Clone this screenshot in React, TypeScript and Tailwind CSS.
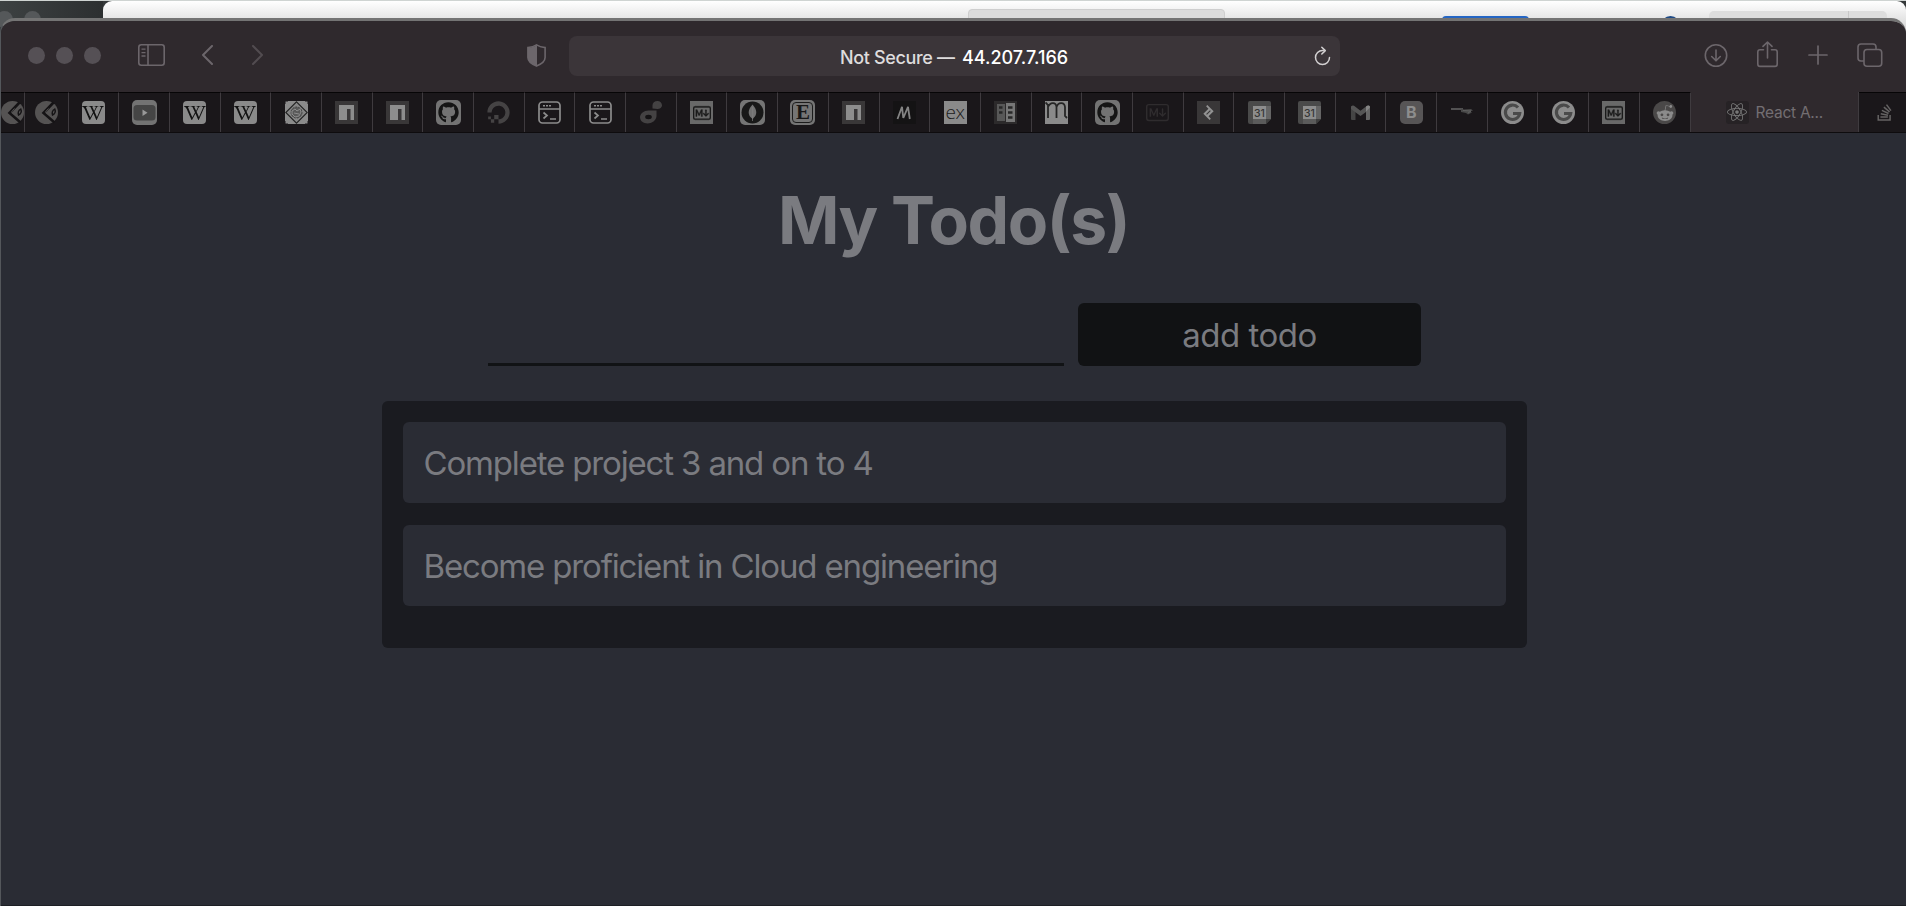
import React from "react";
import { FaWikipediaW, FaGithub, FaDigitalOcean, FaReact, FaStackOverflow, FaRedditAlien } from "react-icons/fa";
import { SiToptal } from "react-icons/si";
import { BsMarkdown } from "react-icons/bs";

const ICON = "block h-[23px] w-[23px] shrink-0";

function Kite() {
  return (
    <svg className={ICON} viewBox="0 0 23 23">
      <circle cx="11.5" cy="11.5" r="11.5" fill="#555353" />
      <path d="M18.500 1.500 8.500 12l11 9.500" stroke="#151315" strokeWidth="2.600" fill="none" />
      <path d="M13 13.500 10.500 11l3-3.500" stroke="#555353" strokeWidth="1" fill="none" />
      <path d="M19.800 8c1.200 2.500.2 5-2.300 6-.8-2.500.3-4.800 2.300-6z" stroke="#151315" strokeWidth="1.400" fill="#555353" />
    </svg>
  );
}

function Wiki() {
  return (
    <span className="flex h-[23px] w-[23px] items-center justify-center rounded-[4px] bg-[#8a8a8a] text-[#121212]">
      <FaWikipediaW className="h-[20px] w-[22px]" />
    </span>
  );
}

function Video() {
  return (
    <svg className="block h-[25px] w-[25px]" viewBox="0 0 25 25">
      <rect width="25" height="25" rx="5" fill="#737373" />
      <rect x="1.500" y="5" width="22" height="15.500" rx="3.500" fill="#454545" />
      <path d="m10.500 9.500 5 3.200-5 3.200z" fill="#999" />
    </svg>
  );
}

function Diamond() {
  return (
    <svg className={ICON} viewBox="0 0 23 23">
      <rect width="23" height="23" fill="#8b8b8b" />
      <path d="M11.500.8 22.200 11.500 11.500 22.200.8 11.500z" fill="#858585" stroke="#222" strokeWidth="1.100" />
      <circle cx="11.500" cy="11.500" r="5.500" fill="#595959" stroke="#444" strokeDasharray="2 1" />
      <path d="M7 10l3-2 2 2 3-2 1 3-2 4-4 1-3-3zM9 12l5 1" stroke="#929292" fill="none" strokeWidth=".9" />
      <path d="M0 3V0h3M20 0h3v3M0 20v3h3M20 23h3v-3" stroke="#1a171a" strokeWidth="1" fill="none" />
    </svg>
  );
}

function Npm() {
  return (
    <svg className={ICON} viewBox="0 0 23 23">
      <rect width="23" height="23" fill="#393738" />
      <path d="M4 4h15v15h-3.500V8H12v11H4z" fill="#8d8d8d" />
    </svg>
  );
}

function Github() {
  return (
    <span className="flex h-[25px] w-[25px] items-center justify-center rounded-[5px] bg-[#737373] text-[#151515]">
      <FaGithub className="h-[21px] w-[21px]" />
    </span>
  );
}

function Ocean() {
  return <FaDigitalOcean className="h-[23px] w-[23px] text-[#454344]" />;
}

function Console() {
  return (
    <svg className={ICON} viewBox="0 0 23 23" fill="none" stroke="#8c8c8c">
      <rect x="1" y="1" width="21" height="21" rx="3.500" strokeWidth="1.700" />
      <path d="M1 8h21" strokeWidth="1.500" />
      <path d="M5 4.700h8" strokeWidth="1.600" strokeDasharray="2 1" />
      <path d="m5.500 11.500 3.500 3-3.500 3M12 18h6" strokeWidth="1.700" />
    </svg>
  );
}

function Duck() {
  return (
    <svg className={ICON} viewBox="0 0 23 23" fill="#444243">
      <path d="M13.500 7.500V4.500C13.500 1.500 15.500 0 18.500 0 21 0 23 2 23 4.300S21 8 18.500 8z" />
      <path d="M17.500 9.500H9.500C5 9.500 1 12.500 1 16.300s3.500 6.200 7.500 6.200S17.500 19.500 17.500 15z" />
      <ellipse cx="9.500" cy="16" rx="3.300" ry="2.200" fill="#141214" />
    </svg>
  );
}

function Markdown() {
  return (
    <span className="flex h-[23px] w-[23px] items-center justify-center bg-[#696969] text-[#1c1c1c]">
      <BsMarkdown className="h-[18px] w-[18px]" stroke="currentColor" strokeWidth=".35" />
    </span>
  );
}

function Mongo() {
  return (
    <svg className="block h-[25px] w-[25px]" viewBox="0 0 25 25">
      <rect width="25" height="25" rx="5" fill="#757575" />
      <circle cx="12.500" cy="12.500" r="11" fill="#181818" />
      <path d="M12.500 4.500c-5.500 6-4.500 11-.4 14v2.500h.8v-2.500c4.100-3 5.100-8-.4-14z" fill="#727272" />
      <path d="M12.700 7v12" stroke="#858585" strokeWidth=".6" />
    </svg>
  );
}

function LetterE() {
  return (
    <span className="flex h-[25px] w-[25px] rounded-[5px] bg-[#757575] p-[2px]">
      <span className="flex flex-1 items-center justify-center rounded-[4px] border-[1.500px] border-[#1c1c1c] font-['Liberation_Serif',serif] text-[21px] leading-[21px] font-bold text-[#181818]">E</span>
    </span>
  );
}

function Slashes() {
  return (
    <svg className={ICON} viewBox="0 0 23 23">
      <rect width="23" height="23" fill="#141314" />
      <path d="M4.500 18 9 5.800 10.300 17 15 5.800 16.800 18" stroke="#848484" strokeWidth="1.800" strokeLinejoin="bevel" fill="none" />
    </svg>
  );
}

function Express() {
  return (
    <span className="flex h-[23px] w-[23px] items-center justify-center bg-[#8a8a8a] font-['Open_Sans',sans-serif] text-[19px] leading-[23px] font-light tracking-[-0.3px] text-[#202020]">
      ex
    </span>
  );
}

function Pages() {
  return (
    <svg className={ICON} viewBox="0 0 23 23">
      <rect width="23" height="23" fill="#2c2a2b" />
      <path d="M3 3h8v17H3z" fill="#585858" />
      <path d="M12 2h9v19h-9z" fill="#777" />
      <path d="M5 6.500h3.500M5 11.500h3.500M14 6.500h4.500M14 11.500h4.500M14 16.500h4.500" stroke="#282828" strokeWidth="2.500" />
    </svg>
  );
}

function Mongoose() {
  return (
    <svg className={ICON} viewBox="0 0 23 23">
      <rect width="23" height="23" fill="#8a8a8a" />
      <path d="M.5 1.500 3 4v13M3 6c2-5 8-5.500 8.500 0v11M11.500 6c1.500-5 8-5.500 8.500 0v9l2 2" stroke="#252525" strokeWidth="1.800" fill="none" />
    </svg>
  );
}

function DimMarkdown() {
  return <BsMarkdown className="h-[23px] w-[23px] text-[#2f2c2e]" />;
}

function Toptal() {
  return (
    <span className="flex h-[23px] w-[23px] items-center justify-center bg-[#393738] text-[#929292]">
      <SiToptal className="h-[15px] w-[15px]" />
    </span>
  );
}

function Calendar() {
  return (
    <svg className={ICON} viewBox="0 0 23 23">
      <path d="M2 0h19q2 0 2 2v16l-5 5H2q-2 0-2-2V2q0-2 2-2z" fill="#4a4a4a" />
      <path d="M18 5h5v13h-5z" fill="#656565" />
      <path d="M5 18h13v5H5z" fill="#5b5b5b" />
      <path d="M18 18h5l-5 5z" fill="#3e3e3e" />
      <path d="M5 5h13v13H5z" fill="#8d8d8d" />
      <text x="11.400" y="15.600" textAnchor="middle" fontFamily="Inter, sans-serif" fontSize="10.500" fontWeight="500" fill="#353535">31</text>
    </svg>
  );
}

function Mail() {
  return (
    <svg className={ICON} viewBox="0 0 23 23">
      <path d="M2 5.500 6.500 8v11H3q-1-.2-1-1z" fill="#454545" />
      <path d="M2 5.500q2-2 4 0l5.500 4.300 5.500-4.300v5.500L11.500 15 2 8z" fill="#555" />
      <path d="M17 5.500q2-2 4 0V18q0 1-1 1h-3z" fill="#666" />
      <path d="M17 5.500q4-2.500 4 1l-4 4z" fill="#858585" />
    </svg>
  );
}

function Bootstrap() {
  return (
    <span className="flex h-[23px] w-[23px] items-center justify-center rounded-[5px] bg-[#575556] font-['Inter',sans-serif] text-[16px] leading-[23px] font-bold text-[#8d8d8d]">
      B
    </span>
  );
}

function Plane() {
  return (
    <svg className={ICON} viewBox="0 0 23 23" fill="none">
      <path d="M1 8h12" stroke="#666" strokeWidth="1.300" />
      <path d="m11 7.500 3 1 7-.5 2 1.500-3 1 2 1-4 2-2-1.500-5-1z" fill="#484848" />
      <path d="m13 9.500 8 .5-3 2" stroke="#666" strokeWidth=".8" />
    </svg>
  );
}

function Google() {
  return (
    <svg className={ICON} viewBox="0 0 23 23">
      <circle cx="11.500" cy="11.500" r="11.500" fill="#8c8c8c" />
      <path d="M17 6.500A7.200 7.200 0 1 0 18.700 12.500H12" fill="none" stroke="#4a4a4a" strokeWidth="3.100" />
    </svg>
  );
}

function Reddit() {
  return (
    <span className="flex h-[23px] w-[23px] items-center justify-center rounded-full bg-[#4a4848] text-[#8b8b8b]">
      <FaRedditAlien className="h-[18px] w-[18px]" />
    </span>
  );
}

const pinned = [
  Wiki, Video, Wiki, Wiki, Diamond, Npm, Npm, Github, Ocean, Console, Console,
  Duck, Markdown, Mongo, LetterE, Npm, Slashes, Express, Pages, Mongoose, Github,
  DimMarkdown, Toptal, Calendar, Calendar, Mail, Bootstrap, Plane, Google, Google,
  Markdown, Reddit,
];

function BackWindow() {
  return (
    <div className="flex h-[34px] bg-[#35393a] pt-px shadow-[inset_0_1px_0_#cfd4d2]">
      <div className="flex w-[103px] shrink-0 gap-[11px] bg-linear-to-r from-[#3d4142] to-[#2c2f30] pt-[10px]">
        <span className="-ml-[4px] h-[17px] w-[17px] rounded-full bg-[#55585a]" />
        <span className="h-[17px] w-[17px] rounded-full bg-[#55585a]" />
      </div>
      <div className="flex flex-1 rounded-t-[9px] bg-linear-to-b from-white to-[#d0d0d0]">
        <span className="mt-[8px] ml-[865px] w-[257px] shrink-0 rounded-t-[4px] border border-[#cecece] bg-[#dcdcdc]" />
        <span className="mt-[15px] ml-[217px] w-[87px] shrink-0 rounded-t-[4px] bg-[#2566c4]" />
        <span className="mt-[15px] ml-[132px] h-[19px] w-[19px] shrink-0 rounded-full bg-[#1d4a86]" />
        <span className="mt-[10px] ml-[29px] w-[140px] shrink-0 rounded-tl-[5px] border-r border-[#c8c8c8] bg-[#dddddd]" />
        <span className="mt-[10px] w-[38px] shrink-0 rounded-tr-[5px] bg-[#dddddd]" />
      </div>
    </div>
  );
}

function Toolbar() {
  return (
    <div className="flex h-[71px] shrink-0 bg-[#2f292d] pl-[27px] text-[#6c666b]">
      <div className="mt-[26px] flex h-[17px] gap-[11px]">
        <span className="h-[17px] w-[17px] rounded-full bg-[#555055]" />
        <span className="h-[17px] w-[17px] rounded-full bg-[#555055]" />
        <span className="h-[17px] w-[17px] rounded-full bg-[#555055]" />
      </div>
      <svg className="mt-[23px] ml-[37px] h-[22px] w-[27px] shrink-0" viewBox="0 0 27 22" fill="none" stroke="currentColor">
        <rect x=".8" y=".8" width="25.400" height="20.400" rx="2.500" strokeWidth="1.600" />
        <path d="M10 1v20" strokeWidth="1.600" />
        <path d="M3.500 5.200h4M3.500 8.600h4M3.500 12h4" strokeWidth="1.300" />
      </svg>
      <svg className="mt-[24px] ml-[36px] h-[20px] w-[13px] shrink-0" viewBox="0 0 13 20" fill="none" stroke="currentColor" strokeWidth="2" strokeLinecap="round" strokeLinejoin="round">
        <path d="M11 1 2 10l9 9" />
      </svg>
      <svg className="mt-[24px] ml-[37px] h-[20px] w-[13px] shrink-0 text-[#524c50]" viewBox="0 0 13 20" fill="none" stroke="currentColor" strokeWidth="2" strokeLinecap="round" strokeLinejoin="round">
        <path d="m2 1 9 9-9 9" />
      </svg>
      <svg className="mt-[23px] ml-[263px] h-[23px] w-[19px] shrink-0" viewBox="0 0 19 23">
        <path d="M9.500.9c2.800 1.900 5.500 2.400 8.600 2.700v9.900c0 4-3.600 6.500-8.600 8.600-5-2.100-8.600-4.600-8.600-8.600V3.600C4 3.300 6.700 2.800 9.500.9z" fill="none" stroke="currentColor" strokeWidth="1.600" />
        <path d="M10 .9C7 2.800 4 3.300.9 3.600v9.900c0 4 3.600 6.500 9.100 8.600z" fill="currentColor" />
      </svg>
      <div className="mt-[15px] ml-[23px] flex h-[40px] w-[771px] shrink-0 items-center rounded-[8px] bg-[#3b3539] pt-[2px] pr-[9px] pl-[271px] font-['Inter',sans-serif] text-[18px] font-medium whitespace-pre">
        <span className="w-[122px] tracking-[-0.35px] text-[#dedcdd]">Not Secure —</span>
        <span className="text-white">44.207.7.166</span>
        <svg className="mb-[2px] ml-auto h-[20px] w-[17px]" viewBox="0 0 17 20" fill="none" stroke="#d2d0d1" strokeWidth="1.500" strokeLinecap="round" strokeLinejoin="round">
          <path d="M9.300 4.500H8.500a7 7 0 1 0 7 7" />
          <path d="m7.800 1.200 3.500 3.400-3.500 3.400" />
        </svg>
      </div>
      <svg className="mt-[23px] ml-[364px] h-[24px] w-[24px] shrink-0" viewBox="0 0 24 24" fill="none" stroke="currentColor" strokeWidth="1.600" strokeLinecap="round" strokeLinejoin="round">
        <circle cx="12" cy="11.500" r="10.700" />
        <path d="M12 6v10.500M7.700 12.500l4.300 4.300 4.300-4.300" />
      </svg>
      <svg className="mt-[20px] ml-[29px] h-[27px] w-[21px] shrink-0" viewBox="0 0 21 27" fill="none" stroke="currentColor" strokeWidth="1.600" strokeLinecap="round" strokeLinejoin="round">
        <path d="M6.500 8.800H3q-2.200 0-2.200 2.200v12q0 2.400 2.200 2.400h15q2.200 0 2.200-2.400V11q0-2.200-2.200-2.200h-3.500" />
        <path d="M10.500 17V1M6 5.400 10.500 1 15 5.400" />
      </svg>
      <svg className="mt-[24px] ml-[30px] h-[20px] w-[20px] shrink-0" viewBox="0 0 20 20" fill="none" stroke="currentColor" strokeWidth="1.700" strokeLinecap="round">
        <path d="M10 1v18M1 10h18" />
      </svg>
      <svg className="mt-[22px] ml-[29px] h-[24px] w-[26px] shrink-0" viewBox="0 0 26 24" fill="none" stroke="currentColor" strokeWidth="1.600">
        <rect x="7" y="6.500" width="17.700" height="16.700" rx="3" />
        <path d="M7 18H4q-3 0-3-3V4q0-3 3-3h12q3 0 3 3v2.500" />
      </svg>
    </div>
  );
}

function TabBar() {
  return (
    <div className="flex h-[41px] shrink-0 overflow-hidden border-b border-[#0e0c0e] bg-[#1a171a]">
      <div className="flex w-[24px] shrink-0 items-center border-t border-r border-t-[#060506] border-r-[#3f3b3f]">
        <Kite />
      </div>
      <div className="flex w-[43.5px] shrink-0 items-center border-t border-r border-t-[#060506] border-r-[#3f3b3f] pl-[10px]">
        <Kite />
      </div>
      {pinned.map((Icon, i) => (
        <div key={i} className="flex w-[50.69px] shrink-0 items-center justify-center border-t border-r border-t-[#060506] border-r-[#3f3b3f]">
          <Icon />
        </div>
      ))}
      <div className="flex w-[168.5px] shrink-0 items-center gap-[7px] border-r border-[#3f3b3f] bg-[#2f292d] pl-[35px]">
        <span className="flex h-[23px] w-[23px] items-center justify-center rounded-[3px] bg-[#262225] text-[#777]">
          <FaReact className="h-[20px] w-[20px]" />
        </span>
        <span className="pt-[2px] font-['Inter',sans-serif] text-[15.5px] tracking-[-0.25px] whitespace-nowrap text-[#736e72]">React A...</span>
      </div>
      <div className="flex flex-1 items-center border-t border-[#060506] pl-[17px]">
        <FaStackOverflow className="h-[19px] w-[17px] text-[#656363]" />
      </div>
    </div>
  );
}

function TodoPage() {
  const todos = ["Complete project 3 and on to 4", "Become proficient in Cloud engineering"];
  return (
    <main className="flex-1 border-b border-[#1d1f24] bg-[#2a2c34] font-['Inter',sans-serif] text-[#7a7b80]">
      <h1 className="mt-[47px] h-[80px] text-center text-[66px] leading-[80px] font-bold tracking-[-1.45px]">My Todo(s)</h1>
      <form className="mt-[43px] flex h-[63px] pl-[487px]" onSubmit={(e) => e.preventDefault()}>
        <input className="mr-[14px] w-[576px] border-b-[3px] border-[#111315] bg-transparent text-[32px] outline-none" />
        <button className="w-[343px] rounded-[6px] bg-[#111214] pt-[3px] text-[33px] tracking-[-0.5px]">add todo</button>
      </form>
      <ul className="mt-[35px] ml-[381px] flex h-[247px] w-[1145px] flex-col gap-[22px] rounded-[6px] bg-[#1a1b20] px-[21px] pt-[21px]">
        {todos.map((todo) => (
          <li key={todo} className="flex h-[81px] items-center rounded-[6px] bg-[#2a2c34] px-[20.5px] pt-[3px] text-[33px] tracking-[-1.16px]">
            {todo}
          </li>
        ))}
      </ul>
    </main>
  );
}

export default function App() {
  return (
    <div className="flex h-[906px] w-[1906px] flex-col overflow-hidden bg-[#2a2c34]">
      <BackWindow />
      <div className="relative -mt-[16px] flex h-[888px] shrink-0 flex-col overflow-hidden rounded-t-[15px] border-t-[3px] border-l border-t-[#747474] border-l-[#54575b]">
        <Toolbar />
        <TabBar />
        <TodoPage />
      </div>
    </div>
  );
}
